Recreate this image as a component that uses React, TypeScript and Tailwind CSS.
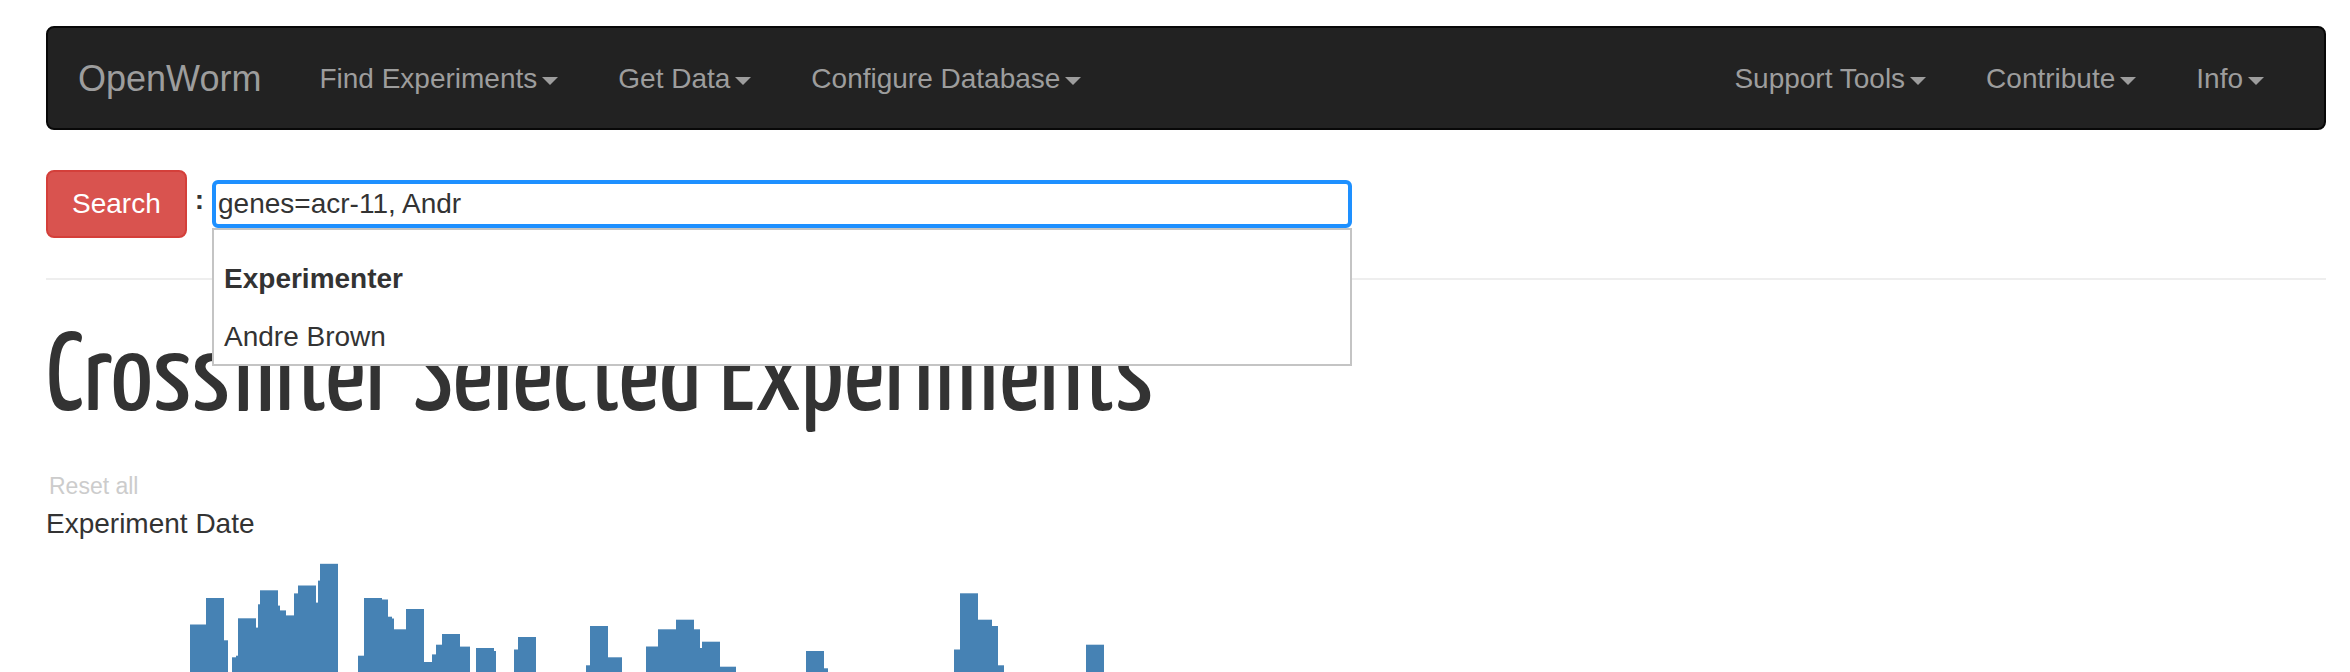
const leftMenus = ["Find Experiments", "Get Data", "Configure Database"];
const rightMenus = ["Support Tools", "Contribute", "Info"];

// Outline of the histogram: [left, right, top]
const steps: [number, number, number][] = [
  [190, 206, 624.5], [206, 224, 598], [224, 228, 640.3], [232, 236, 657.3], [236, 238, 655.7],
  [238, 256, 618.3], [256, 258, 627.6], [258, 260, 604.3], [260, 278, 590.3], [278, 280, 605.6],
  [280, 286, 610.4], [286, 294, 615.4], [294, 298, 593.4], [298, 316, 585.5], [316, 318, 602.6],
  [318, 320, 580.6], [320, 338, 563.8], [358, 364, 655.7], [364, 382, 598], [382, 388, 599.5],
  [388, 392, 616.7], [392, 394, 618.5], [394, 406, 629.3], [406, 424, 609], [424, 432, 662],
  [432, 436, 654.4], [436, 442, 644.7], [442, 460, 634], [460, 470, 646.6], [476, 494, 648],
  [494, 496, 651], [514, 518, 649.5], [518, 536, 637], [586, 590, 665.3], [590, 608, 626],
  [608, 622, 657.3], [646, 658, 646.5], [658, 676, 629.3], [676, 694, 619.7], [694, 700, 629.3],
  [700, 702, 648], [702, 720, 641.7], [720, 736, 666.7], [806, 824, 651], [824, 828, 668.3],
  [954, 960, 649.5], [960, 978, 593.3], [978, 992, 619.7], [992, 998, 626], [998, 1004, 665.3],
  [1086, 1104, 644.7],
];

function Menu({ label }: { label: string }) {
  return (
    <li>
      <button type="button" className="flex items-center gap-[5px] px-[30px] leading-9 whitespace-nowrap">
        {label}
        <svg className="mt-1 h-2 w-4 fill-current" viewBox="0 0 16 8" aria-hidden="true">
          <path d="M0 0h16L8 8z" />
        </svg>
      </button>
    </li>
  );
}

export default function App() {
  return (
    <div className="bg-white pt-[26px] pr-6 pl-[46px] font-['Helvetica_Neue','Liberation_Sans',Arial,sans-serif] text-[28px] leading-10 text-[#333]">
      <nav className="flex items-center rounded-lg border-2 border-[#080808] bg-[#222] pt-[31px] pb-[29px] text-[#9d9d9d]">
        <a href="#" className="pr-7 pl-[30px] text-[36px]">OpenWorm</a>
        <ul className="flex">
          {leftMenus.map((m) => <Menu key={m} label={m} />)}
        </ul>
        <ul className="mr-[30px] ml-auto flex">
          {rightMenus.map((m) => <Menu key={m} label={m} />)}
        </ul>
      </nav>

      <form className="mt-10 flex items-center" onSubmit={(e) => e.preventDefault()}>
        <button type="submit" className="rounded-lg border-2 border-[#d43f3a] bg-[#d9534f] px-6 py-3 text-white">
          Search
        </button>
        <label htmlFor="query" className="px-2 pb-2 font-bold">:</label>
        <div className="relative w-1/2">
          <input
            id="query"
            type="text"
            defaultValue="genes=acr-11, Andr"
            className="block h-12 w-full rounded-md border-4 border-[#1e90ff] bg-white px-0.5 outline-none"
          />
          <div className="absolute top-full left-0 z-10 w-full border-2 border-[#c4c4c4] bg-white px-[10px] pt-[29px] pb-[7px]">
            <p className="font-bold">Experimenter</p>
            <ul className="mt-[18px]">
              <li>Andre Brown</li>
            </ul>
          </div>
        </div>
      </form>

      <hr className="mt-10 border-t-2 border-[#eee]" />

      <h1 className="mt-10 h-[120px] text-[112px] leading-[120px] font-normal whitespace-nowrap font-['Yanone_Kaffeesatz','Open_Sans_Condensed','Noto_Sans_ExtraCondensed','Roboto_Condensed','Liberation_Sans_Narrow','Liberation_Sans',sans-serif]">
        Crossfilter Selected Experiments
      </h1>

      <section className="mt-7">
        <a href="#" className="block px-[3px] text-[23px] leading-9 text-[#ccc]">Reset all</a>
        <h2>Experiment Date</h2>
        <svg className="mt-4 block h-[112px] w-[1080px] fill-[steelblue]" viewBox="46 560 1080 112" role="img" aria-label="Experiment Date">
          {steps.map(([x0, x1, y]) => (
            <rect key={x0} x={x0} y={y} width={x1 - x0} height={672 - y} />
          ))}
        </svg>
      </section>
    </div>
  );
}
